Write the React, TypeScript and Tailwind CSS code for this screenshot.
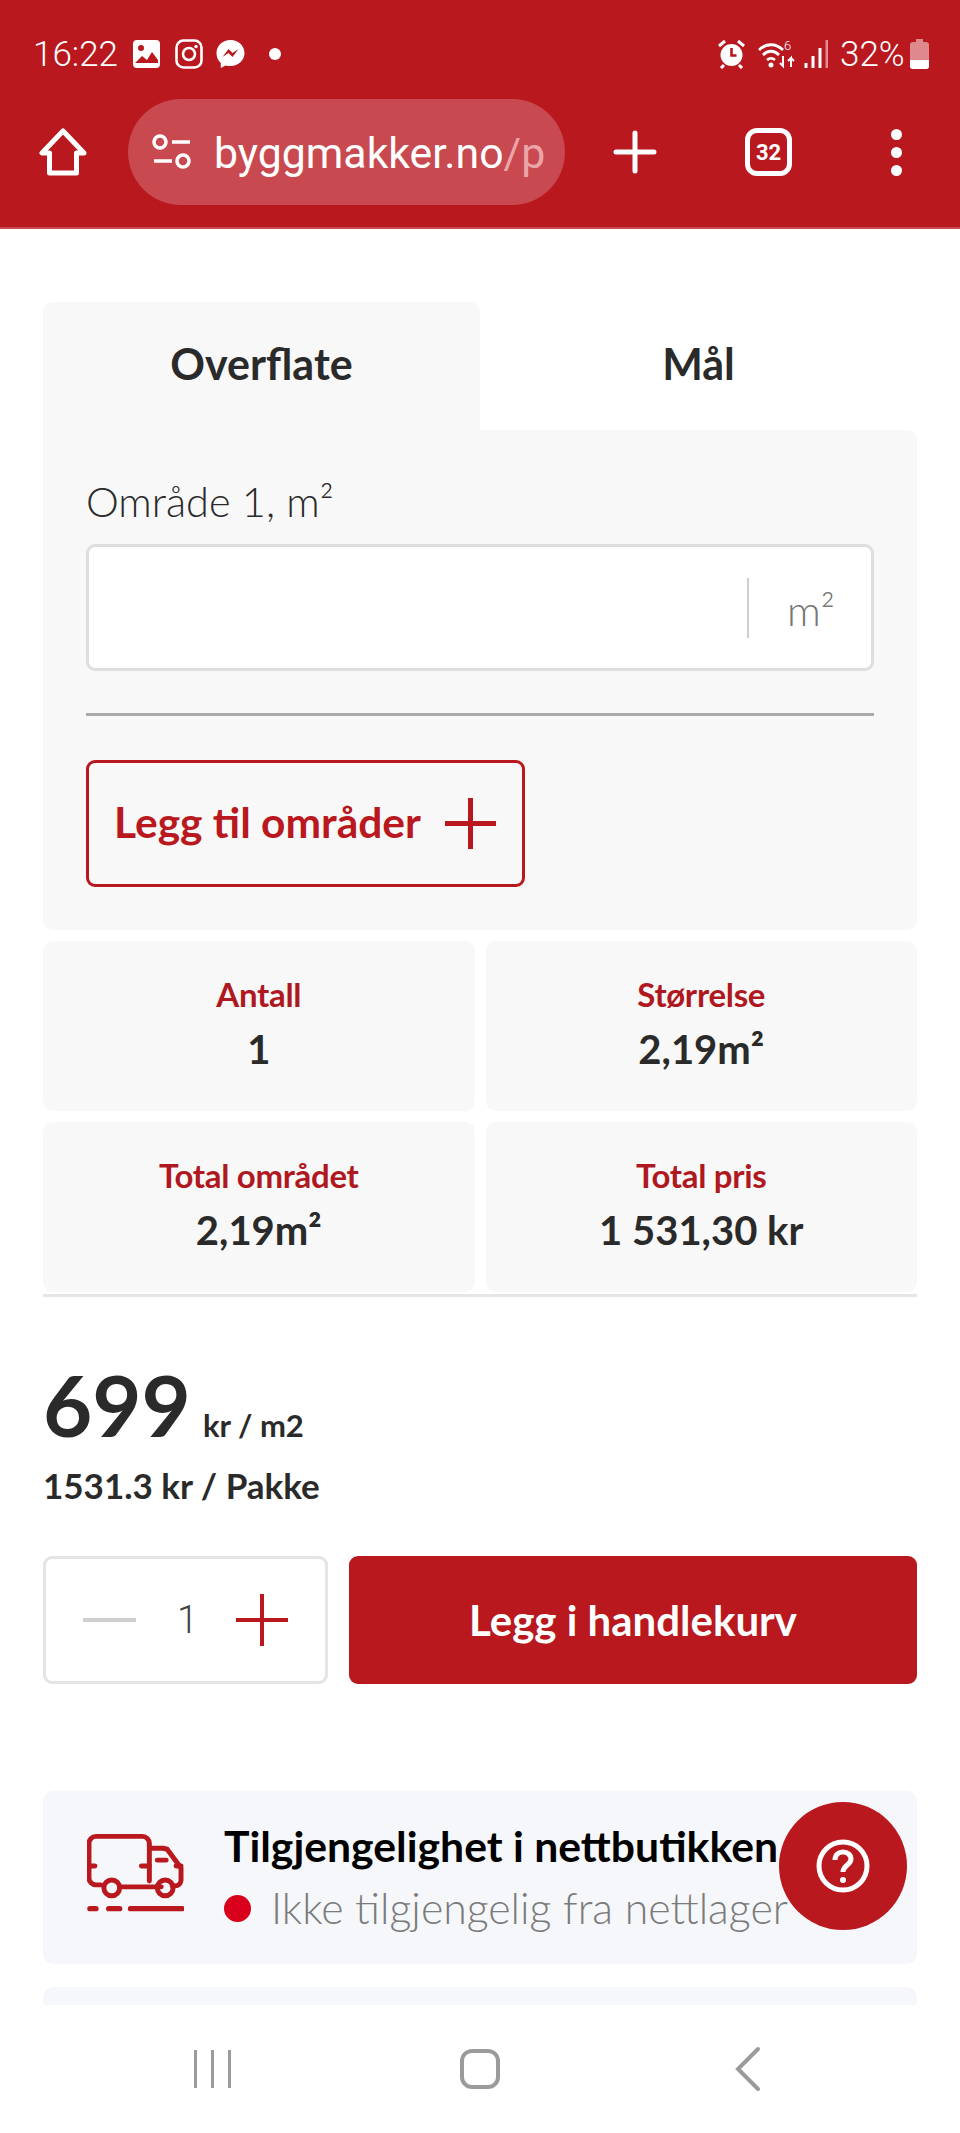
import { ReactNode } from "react";

const lato = "font-['Lato','Noto_Sans',sans-serif]";

function StatCard({ label, value }: { label: string; value: string }) {
  return (
    <div className="flex h-[170px] flex-col items-center rounded-[10px] bg-[#f8f8f8] pt-[32px]">
      <div className="text-[33px] leading-[42px] font-bold tracking-[-0.3px] text-[#b0181f]">{label}</div>
      <div className="mt-[9px] text-[40px] leading-[50px] font-bold text-[#2a2a2a]">{value}</div>
    </div>
  );
}

function PlusLine({ size, weight }: { size: number; weight: number }) {
  return (
    <svg width={size} height={size} viewBox={`0 0 ${size} ${size}`} className="shrink-0">
      <path
        d={`M0 ${size / 2}H${size}M${size / 2} 0V${size}`}
        stroke="#b8181e"
        strokeWidth={weight}
      />
    </svg>
  );
}

function StatusIcon({ width, children }: { width: number; children: ReactNode }) {
  return (
    <svg width={width} height="30" viewBox={`0 0 ${width} 30`} className="shrink-0">
      {children}
    </svg>
  );
}

function StatusBar() {
  return (
    <div className="flex h-[99px] items-center pt-[9px] pr-[31px] pl-[33px] font-['Roboto',sans-serif] text-[35px] font-light text-white">
      <span className="w-[100px] leading-none">16:22</span>
      <StatusIcon width={27}>
        <rect x="0" y="1" width="27" height="28" rx="4" fill="#fff" />
        <circle cx="8" cy="9" r="3" fill="#b8181e" />
        <path d="M2 24l7-7 5 4 5-8 6 8v3H2z" fill="#b8181e" />
      </StatusIcon>
      <div className="w-[15px]" />
      <StatusIcon width={28}>
        <rect x="1.5" y="1.5" width="25" height="27" rx="7" fill="none" stroke="#fff" strokeWidth="2.6" />
        <circle cx="14" cy="15" r="6" fill="none" stroke="#fff" strokeWidth="2.6" />
        <circle cx="21" cy="7.5" r="1.7" fill="#fff" />
      </StatusIcon>
      <div className="w-[13px]" />
      <StatusIcon width={29}>
        <path d="M14.5 1C6.5 1 .5 6.700.5 14.300c0 4 1.700 7.400 4.300 9.700V29l4.700-2.600c1.600.5 3.200.7 5 .7 8 0 14-5.700 14-13C28.500 6.700 22.500 1 14.500 1z" fill="#fff" />
        <path d="M6.500 18l6-8 4 4 6-4-6 8-4-4z" fill="#b8181e" />
      </StatusIcon>
      <span className="ml-[24px] h-[12px] w-[12px] rounded-full bg-white" />
      <div className="flex-1" />
      <StatusIcon width={27}>
        <circle cx="13.500" cy="16" r="11" fill="#fff" />
        <path d="M13.500 9v7.500h5" fill="none" stroke="#b8181e" strokeWidth="2.600" />
        <path d="M1 7l6-5M26 7l-6-5M6 26l-3 3M21 26l3 3" stroke="#fff" strokeWidth="3" />
      </StatusIcon>
      <div className="w-[13px]" />
      <StatusIcon width={37}>
        <path d="M1 11c7-7 17-7 24 0M5 16c5-5 11-5 16 0M9 21c3-2.500 5-2.500 8 0" fill="none" stroke="#fff" strokeWidth="2.800" />
        <circle cx="13" cy="26" r="2.500" fill="#fff" />
        <path d="M25 17v10l-3-3M33 28V19l-3 3M33 19l3 3" fill="none" stroke="#fff" strokeWidth="2" />
        <text x="26" y="11" fontSize="13" fill="#fff" fontFamily="Roboto">6</text>
      </StatusIcon>
      <div className="w-[9px]" />
      <StatusIcon width={24}>
        <path d="M2 24v5M9 17v12M16 9v20" stroke="#fff" strokeWidth="3" />
        <path d="M23 1v28" stroke="#e28d90" strokeWidth="3" />
      </StatusIcon>
      <span className="ml-[12px] w-[70px] leading-none">32%</span>
      <svg width="19" height="30" viewBox="0 0 19 30" className="shrink-0">
        <path d="M6 0h7v3h3a3 3 0 013 3v21a3 3 0 01-3 3H3a3 3 0 01-3-3V6a3 3 0 013-3h3z" fill="#de8a8d" />
        <path d="M0 21h19v6a3 3 0 01-3 3H3a3 3 0 01-3-3z" fill="#fff" />
      </svg>
    </div>
  );
}

function Toolbar() {
  return (
    <div className="flex h-[106px] items-center">
      <div className="flex w-[128px] shrink-0 justify-center pr-[2px]">
        <svg width="48" height="48" viewBox="0 0 48 48" fill="none" stroke="#fff" strokeWidth="5" strokeLinejoin="round">
          <path d="M24 3L3 25h7.500v20h27V25H45z" />
        </svg>
      </div>
      <div className="flex h-[106px] w-[437px] shrink-0 items-center overflow-hidden rounded-full bg-[#c84a50] pl-[24px]">
        <svg width="40" height="36" viewBox="0 0 40 36" fill="none" stroke="#fff" strokeWidth="3.500" className="shrink-0">
          <circle cx="8" cy="8" r="6" />
          <path d="M20 8h18M2 27h18" />
          <circle cx="31" cy="27" r="6" />
        </svg>
        <span className="ml-[22px] pt-[3px] font-['Roboto',sans-serif] text-[42.8px] leading-none whitespace-nowrap text-white">
          byggmakker.no<span className="text-[#eba5a8]">/p</span>
        </span>
      </div>
      <div className="ml-[48px] shrink-0">
        <svg width="44" height="44" viewBox="0 0 44 44" stroke="#fff" strokeWidth="5" strokeLinecap="round">
          <path d="M3 22h38M22 3v38" />
        </svg>
      </div>
      <div className="ml-[88px] flex h-[48px] w-[47px] shrink-0 items-center justify-center rounded-[12px] border-[5px] border-white font-['Roboto',sans-serif] text-[22px] font-bold text-white">
        32
      </div>
      <div className="ml-[99px] flex shrink-0 flex-col gap-[7px]">
        <span className="h-[11px] w-[11px] rounded-full bg-white" />
        <span className="h-[11px] w-[11px] rounded-full bg-white" />
        <span className="h-[11px] w-[11px] rounded-full bg-white" />
      </div>
    </div>
  );
}

function Truck() {
  return (
    <svg width="97" height="80" viewBox="0 0 98 80" fill="none" stroke="#b8181e" strokeWidth="5" strokeLinecap="round" strokeLinejoin="round" className="shrink-0">
      <path d="M14 52H9a7 7 0 01-7-7V10a7 7 0 017-7h47a7 7 0 017 7v38" />
      <path d="M63 15h14l4 1 14 19v12a6 6 0 01-6 6h-3" />
      <path d="M33 54h42" />
      <circle cx="25" cy="55" r="8" />
      <circle cx="79" cy="55" r="8" />
      <path d="M2 33h6M55 33h8M90 33h5M71 27h9" />
      <path d="M3 76h6M22 76h11M44 76h52" strokeWidth="5.500" />
    </svg>
  );
}

export default function App() {
  return (
    <div className={`relative flex h-[2133px] w-[960px] flex-col overflow-hidden bg-white ${lato}`}>
      <header className="h-[229px] shrink-0 border-b-2 border-[#cc4a4f] bg-[#b8181e]">
        <StatusBar />
        <Toolbar />
      </header>

      <main className="min-h-0 flex-1 overflow-hidden px-[43px] pt-[73px]">
        <div className="flex">
          <div className="flex h-[128px] w-[437px] items-center justify-center rounded-t-[10px] bg-[#f8f8f8] pb-[4px] text-[43px] font-bold text-[#2a2a2a]">
            Overflate
          </div>
          <div className="flex h-[128px] flex-1 items-center justify-center pb-[4px] text-[43px] font-bold text-[#2a2a2a]">
            Mål
          </div>
        </div>

        <section className="h-[500px] rounded-[10px] rounded-tl-none bg-[#f8f8f8] px-[43px] pt-[45px]">
          <label className="block text-[41.5px] leading-[52px] font-light text-[#2a2a2a]">Område 1, m²</label>
          <div className="mt-[17px] flex h-[127px] items-center justify-end rounded-[9px] border-[3px] border-[#dedede] bg-white">
            <div className="h-[60px] w-[2px] bg-[#cfcfcf]" />
            <span className="w-[122px] pt-[5px] pl-[38px] text-[42px] font-light text-[#777]">m²</span>
          </div>
          <div className="mt-[42px] h-[3px] bg-[#ababab]" />
          <button className="mt-[44px] flex h-[127px] w-[439px] items-center gap-[24px] rounded-[9px] border-[3px] border-[#b8181e] pl-[25px] text-[42.5px] font-bold text-[#b8181e]">
            <span className="pb-[3px]">Legg til områder</span>
            <PlusLine size={51} weight={5} />
          </button>
        </section>

        <div className="mt-[11px] grid grid-cols-2 gap-x-[11px] gap-y-[11px]">
          <StatCard label="Antall" value="1" />
          <StatCard label="Størrelse" value="2,19m²" />
          <StatCard label="Total området" value="2,19m²" />
          <StatCard label="Total pris" value="1 531,30 kr" />
        </div>
        <div className="mt-[2px] h-[3px] bg-[#e6e6e6]" />

        <div className="mt-[62px] flex items-baseline">
          <span className="text-[85px] leading-[90px] font-bold text-[#2a2a2a]">699</span>
          <span className="ml-[12px] text-[31px] font-bold text-[#2a2a2a]">kr / m2</span>
        </div>
        <div className="mt-[13px] text-[35px] leading-[46px] font-bold text-[#2a2a2a]">1531.3 kr / Pakke</div>

        <div className="mt-[48px] flex h-[128px] gap-[21px]">
          <div className="flex w-[285px] shrink-0 items-center rounded-[9px] border-[3px] border-[#e4e4e4] bg-white pl-[37px]">
            <span className="h-[4px] w-[53px] bg-[#cfcfcf]" />
            <span className="w-[100px] pl-[3px] text-center font-['Roboto',sans-serif] text-[38px] font-light text-[#444]">1</span>
            <PlusLine size={52} weight={4} />
          </div>
          <button className="flex-1 rounded-[9px] bg-[#b8181e] text-[42px] font-bold text-white">Legg i handlekurv</button>
        </div>

        <section className="mt-[107px] flex h-[173px] gap-[40px] rounded-[10px] bg-[#f6f7fa] pt-[42px] pl-[44px]">
          <Truck />
          <div className="-mt-[14px] min-w-0">
            <div className="text-[42.7px] leading-[54px] font-bold whitespace-nowrap text-black">
              Tilgjengelighet i nettbutikken
            </div>
            <div className="mt-[8px] flex items-center gap-[20px] whitespace-nowrap">
              <span className="h-[27px] w-[27px] shrink-0 rounded-full bg-[#d8001b]" />
              <span className="text-[42.8px] leading-[54px] font-light text-[#7b7b7b]">Ikke tilgjengelig fra nettlager</span>
            </div>
          </div>
        </section>
        <div className="mt-[23px] h-[40px] rounded-t-[10px] bg-[#f6f7fa]" />
      </main>

      <nav className="grid h-[128px] shrink-0 grid-cols-[386px_1fr_1fr] items-center bg-white">
        <div className="flex justify-end gap-[14px] pr-[155px]">
          <span className="h-[38px] w-[3px] bg-[#9b9b9b]" />
          <span className="h-[38px] w-[3px] bg-[#9b9b9b]" />
          <span className="h-[38px] w-[3px] bg-[#9b9b9b]" />
        </div>
        <div className="pl-[74px]">
          <div className="h-[40px] w-[40px] rounded-[12px] border-[4px] border-[#9b9b9b]" />
        </div>
        <div className="pl-[62px]">
          <svg width="26" height="46" viewBox="0 0 26 46" fill="none" stroke="#9b9b9b" strokeWidth="4" strokeLinecap="round">
            <path d="M23 3L3 23l20 20" />
          </svg>
        </div>
      </nav>

      <button className="absolute top-[1802px] left-[779px] flex h-[128px] w-[128px] items-center justify-center rounded-full bg-[#b8181e]">
        <svg width="54" height="54" viewBox="0 0 54 54" fill="none">
          <circle cx="27" cy="27" r="24" stroke="#fff" strokeWidth="5" />
          <path d="M19 21c0-5 3.500-8 8-8s8 3 8 7c0 6-8 6-8 13" stroke="#fff" strokeWidth="5" />
          <circle cx="27" cy="41" r="3" fill="#fff" />
        </svg>
      </button>
    </div>
  );
}
